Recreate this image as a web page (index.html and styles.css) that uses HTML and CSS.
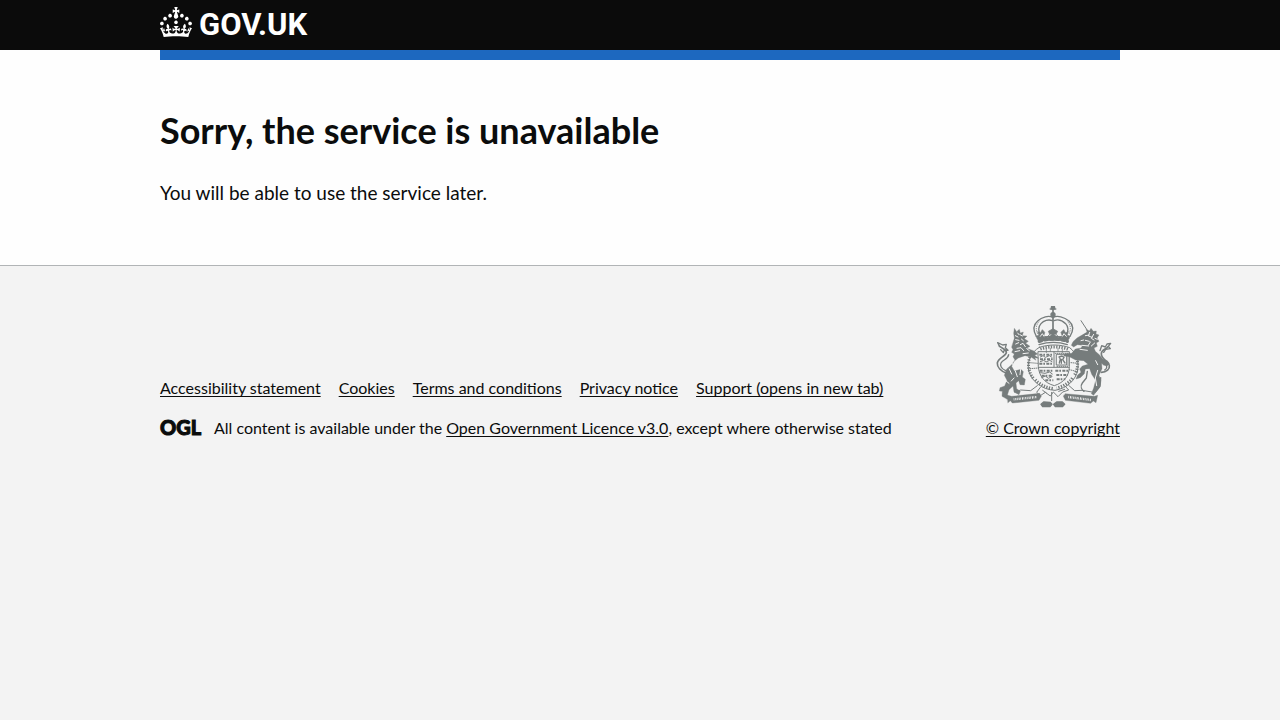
FILE: index.html
```html
<!DOCTYPE html>
<html lang="en">
<head>
<meta charset="utf-8">
<meta name="viewport" content="width=device-width, initial-scale=1">
<title>Sorry, the service is unavailable</title>
<link rel="stylesheet" href="styles.css">
</head>
<body>
<header class="header">
  <div class="container">
    <a class="brand" href="#" aria-label="GOV.UK">
      <svg class="brand-crown" viewBox="0 0 32 30" aria-hidden="true"><path fill="currentColor" d="M22.6 10.4c-1 .4-2-.1-2.4-1-.4-.9.1-2 1-2.4.9-.4 2 .1 2.4 1s-.1 2-1 2.4m-5.9 6.7c-.9.4-2-.1-2.4-1-.4-.9.1-2 1-2.4.9-.4 2 .1 2.4 1s-.1 2-1 2.4m10.8-3.7c-1 .4-2-.1-2.4-1-.4-.9.1-2 1-2.4.9-.4 2 .1 2.4 1s0 2-1 2.4m3.3 4.8c-1 .4-2-.1-2.4-1-.4-.9.1-2 1-2.4.9-.4 2 .1 2.4 1s-.1 2-1 2.4M17 4.7l2.3 1.2V2.5l-2.3.7-.2-.2.9-3h-3.4l.9 3-.2.2c-.1.1-2.3-.7-2.3-.7v3.4L15 4.7c.1.1.1.2.2.2l-1.3 4c-.1.2-.1.4-.1.6 0 1.1.8 2 1.9 2.2h.7c1-.2 1.9-1.1 1.9-2.1 0-.2 0-.4-.1-.6l-1.3-4c-.1-.2 0-.2.1-.3m-7.6 5.7c.9.4 2-.1 2.4-1 .4-.9-.1-2-1-2.4-.9-.4-2 .1-2.4 1s0 2 1 2.4m-5 3c.9.4 2-.1 2.4-1 .4-.9-.1-2-1-2.4-.9-.4-2 .1-2.4 1s.1 2 1 2.4m-3.2 4.8c.9.4 2-.1 2.4-1 .4-.9-.1-2-1-2.4-.9-.4-2 .1-2.4 1s0 2 1 2.4m14.8 11c4.4 0 8.6.3 12.3.8 1.1-4.5 2.4-7 3.7-8.8l-2.5-.9c.2 1.3.3 1.9 0 2.7-.4-.4-.8-1.1-1.1-2.3l-1.2 4c.7-.5 1.3-.8 2-.9-1.1 2.5-2.6 3.1-3.5 3-1.1-.2-1.7-1.2-1.5-2.1.3-1.2 1.5-1.5 2.1-.1 1.1-2.3-.8-3-2-2.3 1.9-1.9 2.1-3.5.6-5.6-2.1 1.6-2.1 3.2-1.2 5.5-1.2-1.4-3.2-.6-2.5 1.6.9-1.4 2.1-.5 1.9.8-.2 1.1-1.7 2.1-3.5 1.9-2.7-.2-2.9-2.1-2.9-3.6.7-.1 1.9.5 2.9 1.9l.4-4.3c-1.1 1.1-2.1 1.4-3.2 1.4.4-1.2 2.1-3 2.1-3h-5.4s1.7 1.9 2.1 3c-1.1 0-2.1-.2-3.2-1.4l.4 4.3c1-1.4 2.2-2 2.9-1.9-.1 1.5-.2 3.4-2.9 3.6-1.9.2-3.4-.8-3.5-1.9-.2-1.3 1-2.2 1.9-.8.7-2.3-1.2-3-2.5-1.6.9-2.2.9-3.9-1.2-5.5-1.5 2-1.3 3.7.6 5.6-1.2-.7-3.1 0-2 2.3.6-1.4 1.8-1.1 2.1.1.2.9-.3 1.9-1.5 2.1-.9.2-2.4-.5-3.5-3 .6 0 1.2.3 2 .9l-1.2-4c-.3 1.1-.7 1.9-1.1 2.3-.3-.8-.2-1.4 0-2.7l-2.9.9C1.3 23 2.6 25.5 3.7 30c3.7-.5 7.9-.8 12.3-.8"/></svg>
      <span>GOV.UK</span>
    </a>
  </div>
</header>
<div class="container">
  <main class="main">
    <h1 class="heading">Sorry, the service is unavailable</h1>
    <p class="body-text">You will be able to use the service later.</p>
  </main>
</div>
<footer class="footer">
  <div class="container footer-row">
    <div class="footer-meta">
      <ul class="footer-links">
        <li><a class="link" href="#">Accessibility statement</a></li>
        <li><a class="link" href="#">Cookies</a></li>
        <li><a class="link" href="#">Terms and conditions</a></li>
        <li><a class="link" href="#">Privacy notice</a></li>
        <li><a class="link" href="#">Support (opens in new tab)</a></li>
      </ul>
      <div class="licence">
        <span class="ogl">OGL</span>
        <span>All content is available under the <a class="link" href="#">Open Government Licence v3.0</a>, except where otherwise stated</span>
      </div>
    </div>
    <a class="copyright" href="#">
      <svg class="arms" viewBox="33 33 375 306" aria-hidden="true" fill="none" stroke="currentColor" stroke-width="4" stroke-linecap="round" stroke-linejoin="round">
        <!-- crown -->
        <path stroke-width="5" d="M222 36v18M214 42h16M222 62v40"/>
        <circle cx="222" cy="38" r="5" fill="currentColor"/>
        <circle cx="222" cy="59" r="6" fill="currentColor"/>
        <path d="M222 68c-12-8-34-2-46 10-14 12-14 28-4 46M222 68c12-8 34-2 48 10 14 12 14 28 3 46M220 77c-12-5-26 0-34 9-9 10-8 22-2 34M225 77c12-5 26 0 35 9 9 10 8 22 2 34"/>
        <path stroke-width="3" stroke-dasharray="1 6" d="M179 81c-9 11-9 24-2 38M267 81c9 11 9 24 2 38"/>
        <path fill="currentColor" stroke-width="2" d="M172 124l8-4-4-10 8 4 6-10 7 8-3 12 10 2 8-8-4-9 14-8 14 8-5 9 9 8 10-2-4-12 8-8 6 10 8-4-4 10 9 4-6 12H178z"/>
        <path stroke="#f3f3f3" stroke-width="3" d="M184 124l6-8 6 10M208 126l7-7M229 119l7 7M249 126l6-10 7 8"/>
        <path stroke-width="10" stroke-dasharray="8 9" d="M181 139c24-9 60-9 84 0"/>
        <path d="M176 130c28-7 66-7 93 0M180 149c26-8 60-8 85 0"/>
        <!-- garter and shield -->
        <path stroke-width="3" d="M181 157c30-10 64-9 91 1 20 15 29 41 24 67-5 29-31 55-68 61-39-2-69-26-79-58-5-27 5-55 32-71z"/>
        <path stroke-width="9" stroke-dasharray="4 4" stroke-linecap="butt" d="M184 162c27-9 59-8 84 1M156 178c-12 24-10 51 8 73M289 174c10 24 9 48-3 67M169 254c14 16 33 24 55 27M280 249c-12 17-28 25-47 30"/>
        <path stroke-width="3" d="M178 170h93v45c-1 28-15 47-45 57-30-8-46-29-48-57zM225 170v46M178 217h92"/>
        <path stroke-width="6" stroke-dasharray="9 3 5 4" stroke-linecap="butt" d="M181 179h40M183 193h40M181 206h42M229 227h39M232 240h35M233 253h26M182 227h39M188 242h32M199 256h24"/>
        <path stroke-width="3" d="M184 186l8-4 7 5 12-5 8 5M184 200l10-4 7 5 11-5 7 4M233 178h30v32h-30zM185 233l13 2 14-4 8 6M188 248l11-5 9 7 11-5"/>
        <path d="M241 204l3-12-4-6 9-3 6 4-4 7 7 10M247 193v12"/>
        <path stroke-width="3" stroke-dasharray="2 4" d="M229 175h38v39h-37M202 164v8M214 161v9M237 161v9M250 164v8M152 203l24 2M276 203l23 2M153 221l25-2M271 224l25 6"/>
        <!-- lion -->
        <path fill="currentColor" stroke-width="1" d="M106 129l-2-14 2-15 7 10 8-7 3 11 9-3-3 11 14 1-8 8 12 8-8 6 13 9-10 6 20 7 13 10-9 4 12 9-12-2 4 8-15-10-18-4-20 7-13 10-7 15 8 14 20-5 7 7-3 16 9 7-3 17-13-1-4-12-8 7 2 17 11 8-4 10-15-8-3-18-12 11-5 17 8 9-8 3-16-9 1-15-9-1 2-10 14-5 7-17-8-15 7-19 15-13 10-14-6-10 4-8-8-5 4-8-4-7z"/>
        <path stroke="#f3f3f3" stroke-width="3" d="M109 122l8 4M123 119l7 4M110 134l10 2M127 132l6 5M110 147l9-4M124 149l8-4 7 10M114 160l12-2 8 9M108 170l14-3M132 176l16-2M98 203l10 15 19-7M91 222l7 15M109 228l6 17M125 223l-2 16M116 114l4 5M143 161l8 6M80 257l10 8M105 249l-8 9"/>
        <path stroke-width="5" d="M83 235c-17-6-29-18-28-31 3-16 26-20 27-32 0-10-11-10-21-19"/>
        <path d="M62 155l-6-12 15 7 11-2-3 10 8 8-11-1-3 8-8-9M80 227c-13-6-18-16-14-23 6-10 22-12 23-25"/>
        <!-- unicorn -->
        <path d="M306 77l17 26" stroke-width="3"/>
        <path fill="currentColor" stroke-width="1" d="M324 111l-3-9 10 6 5-8 7 9 9-1-1 9 9 3-6 9 6 10-8 5 3 10-10 5 4 10 12 10 10 13 14 5 6 8-5 7-12-1-6-6 1 16-9 20 6 16-3 19-12 15-7 10-7-5 7-17 6-23-12-18-6-17-13 1-3 14-12 12-13 4 5-12 10-8-4-10 8-9 17-5-13-11-24-2-19-10-17-2 4-7 20-1 11-13 17-3 5-8-16-2-11 7-7-5 5-11 12-11z"/>
        <path stroke="#f3f3f3" stroke-width="3" d="M319 122l12-2M332 112l-4 11 11 4M344 118l-7 12 8 5M319 136l12 3M334 141l-6 10M309 151l20 2M347 144l-10 9M303 163l22 3M350 197l6 12M356 226l-7 23 4 23M331 233l-9 8M306 137l8-2M348 130l7 3"/>
        <path stroke-width="5" d="M367 232c16 0 26-11 24-21-3-13-24-18-24-34-1-13 14-14 20-22"/>
        <path d="M363 167l5-15 11 4 5-9 11-2-7 9 6 7-14 2-6 9M377 225c8-4 8-12 2-17M325 229l-3 20-12 15c-7 10-2 20 5 25M365 248l-2 25-14 18"/>
        <!-- compartment and motto -->
        <path fill="currentColor" stroke-width="1" d="M84 300l14 4 84-9 5 9-7 12-80 8-6-7-7 6zM259 296l87 8 10-3-5 22-8-5-8 7-76-9-6-12z"/>
        <path stroke="#f3f3f3" stroke-width="7" stroke-linecap="butt" stroke-dasharray="2 3 3 2" d="M104 313l70-7M268 306l68 9"/>
        <path stroke-width="3" d="M107 291l18-6 30 2 20-15M339 291l-30-5-22 1-18-16M184 277l-11 15 11 10 15-10 15 11 9-12 14 14 14-14 18-6-11-12M191 286l11 8M239 289l18-6M218 292v25"/>
        <path fill="currentColor" d="M194 321l19 1 6 6-6 7h-22l-5-7zM233 321h17l7 7-7 7h-21l-5-7z"/>
      </svg>
      <span class="link">© Crown copyright</span>
    </a>
  </div>
</footer>
</body>
</html>
```

FILE: styles.css
```css
html {
  background: #f3f3f3;
}

body {
  margin: 0;
  background: #fefefe;
  color: #0b0c0c;
  font-family: Lato, "Liberation Sans", Arial, sans-serif;
}

.container {
  max-width: 960px;
  margin: 0 auto;
}

.header {
  background: linear-gradient(#0b0b0b 50px, #fefefe 50px);
  color: #ffffff;
}

.header .container {
  border-bottom: 10px solid #1d68bf;
}

.brand {
  display: flex;
  align-items: center;
  gap: 7px;
  height: 50px;
  box-sizing: border-box;
  padding-bottom: 6px;
  color: #ffffff;
  font-family: Roboto, "Liberation Sans", sans-serif;
  font-size: 31px;
  font-weight: 700;
  line-height: 30px;
  text-decoration: none;
}

.brand span {
  padding-top: 5px;
}

.brand-crown {
  width: 32px;
  height: 30px;
}

.main {
  padding: 50px 0 40px;
}

.heading {
  margin: 0 0 30px;
  font-size: 36px;
  font-weight: 700;
  line-height: 40px;
}

.body-text {
  margin: 0 0 20px;
  font-size: 19px;
  line-height: 25px;
}

.footer {
  padding: 40px 0 25px;
  border-top: 1px solid #b1b4b6;
  background: #f3f3f3;
  font-size: 16px;
  line-height: 20px;
}

.footer-row {
  display: flex;
  flex-wrap: wrap;
  align-items: flex-end;
  justify-content: space-between;
}

.footer-links {
  display: flex;
  flex-wrap: wrap;
  gap: 5px 18px;
  margin: 0 0 20px;
  padding: 0;
  list-style: none;
}

.licence {
  display: flex;
  align-items: center;
  gap: 13px;
}

.ogl {
  width: 41px;
  font-size: 20px;
  font-weight: 900;
  line-height: 18px;
  padding-bottom: 2px;
  -webkit-text-stroke: 1px #0b0c0c;
}

.link {
  color: #0b0c0c;
  text-decoration: underline;
  text-decoration-thickness: 1px;
  text-decoration-skip-ink: none;
  text-underline-offset: 2px;
}

.copyright {
  display: flex;
  flex-direction: column;
  align-items: center;
  gap: 10px;
  color: #0b0c0c;
  text-decoration: none;
}

.arms {
  width: 125px;
  height: 102px;
  color: #767c7c;
}
```
